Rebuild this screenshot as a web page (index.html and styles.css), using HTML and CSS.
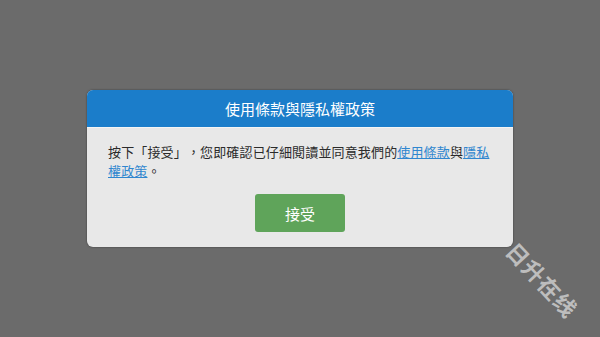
FILE: index.html
```html
<!DOCTYPE html>
<html lang="zh-Hant">
<head>
<meta charset="utf-8">
<title>使用條款與隱私權政策</title>
<link rel="stylesheet" href="styles.css">
</head>
<body>
<div class="dialog">
  <div class="dialog-header">使用條款與隱私權政策</div>
  <div class="dialog-body">
    <p class="dialog-text">按下「接受」，您即確認已仔細閱讀並同意我們的<a href="#" class="link">使用條款</a>與<a href="#" class="link">隱私權政策</a>。</p>
    <div class="actions"><button class="btn-accept">接受</button></div>
  </div>
</div>
<div class="watermark">日升在线</div>
</body>
</html>
```
FILE: styles.css
```css
html, body {
  margin: 0;
  padding: 0;
  width: 600px;
  height: 337px;
  overflow: hidden;
}
body {
  background: #6b6b6b;
  display: flex;
  align-items: center;
  justify-content: center;
  font-family: "Noto Sans CJK TC", "Noto Sans", sans-serif;
  position: relative;
  text-spacing-trim: space-all;
}
.dialog {
  width: 426px;
  background: #e8e8e8;
  border-radius: 6px;
  box-shadow: 0 0 2px rgba(0,0,0,0.5);
  overflow: hidden;
}
.dialog-header {
  background: #1b7dca;
  color: #ffffff;
  height: 37px;
  line-height: 37px;
  text-align: center;
  font-size: 15px;
  border-bottom: 1px solid #f4f4f4;
}
.dialog-body {
  padding: 14px 21px 15px 21px;
}
.dialog-text {
  margin: 0;
  font-size: 13px;
  line-height: 19px;
  letter-spacing: 0.15px;
  color: #2b2b2b;
  text-spacing-trim: space-all;
}
.link {
  color: #2f86cf;
  text-decoration: underline;
}
.actions {
  display: flex;
  justify-content: center;
  margin-top: 14px;
}
.btn-accept {
  width: 90px;
  height: 38px;
  background: #5fa45a;
  color: #ffffff;
  border: none;
  border-radius: 3px;
  font-family: "Noto Sans CJK TC", "Noto Sans", sans-serif;
  font-size: 15px;
  padding: 0;
}
.watermark {
  position: absolute;
  left: 488px;
  top: 267px;
  width: 110px;
  text-align: center;
  transform: rotate(47deg);
  color: rgba(205,205,205,0.85);
  font-size: 22px;
  font-weight: bold;
  letter-spacing: 1px;
  line-height: 24px;
}
```
